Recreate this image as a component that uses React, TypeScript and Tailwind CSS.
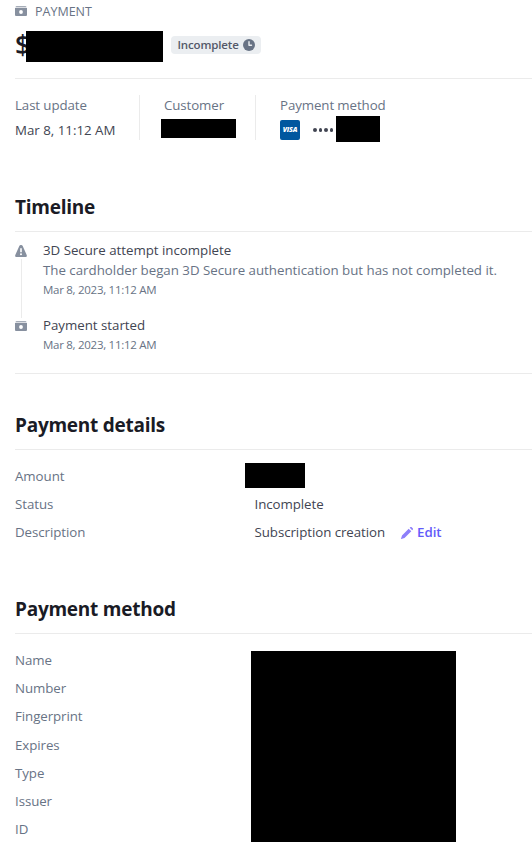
import React from 'react';

interface IconProps {
  className?: string;
}

function PaymentIcon({ className }: IconProps) {
  return (
    <svg className={className} viewBox="0 0 12 10" fill="currentColor">
      <path opacity=".75" d="M1.600 0h8.800c.6 0 1 .4 1.100 1H.5C.6.4 1 0 1.600 0z" />
      <path opacity=".3" d="M.5 1h11v1H.5z" />
      <path
        fillRule="evenodd"
        d="M0 2h12v7a1 1 0 0 1-1 1H1a1 1 0 0 1-1-1V2zm6 2.100a1.900 1.900 0 1 0 0 3.800 1.900 1.900 0 0 0 0-3.800z"
      />
    </svg>
  );
}

function WarningIcon({ className }: IconProps) {
  return (
    <svg className={className} viewBox="0 0 12 12" fill="currentColor">
      <path
        fillRule="evenodd"
        d="M4.300 1.100C5-.4 7-.4 7.700 1.100l4 8.800c.5 1.100-.1 2.100-1.200 2.100h-9C.4 12-.2 11 .3 9.900zM5.200 3.300v3.900h1.600V3.300zM6 8.200a1 1 0 1 0 0 2 1 1 0 0 0 0-2z"
      />
    </svg>
  );
}

function ClockIcon({ className }: IconProps) {
  return (
    <svg className={className} viewBox="0 0 12 12">
      <circle cx="6" cy="6" r="6" fill="currentColor" />
      <path d="M6 2.800V6.200h2.500" fill="none" stroke="#ebeef1" strokeWidth="1.400" strokeLinecap="round" strokeLinejoin="round" />
    </svg>
  );
}

function PencilIcon({ className }: IconProps) {
  return (
    <svg className={className} viewBox="0 0 12 12" fill="currentColor">
      <path d="M7.700 1.700l2.600 2.600-6.800 6.700L.3 12c-.2.100-.4-.1-.3-.3l1-3.300z" />
      <path d="M8.700.800l.5-.5c.4-.4 1.100-.4 1.500 0l1 1c.4.4.4 1.100 0 1.500l-.5.5z" />
    </svg>
  );
}

function Redacted({ className }: IconProps) {
  return <div className={`shrink-0 bg-black ${className}`} />;
}

function SectionTitle({ children }: { children: React.ReactNode }) {
  return (
    <h2 className="flex h-[38px] items-center border-b border-[#ebebeb] pb-2.5 text-[19px] font-bold tracking-[-0.25px] text-[#1a1b25]">
      {children}
    </h2>
  );
}

interface EventProps {
  icon: React.ReactNode;
  title: string;
  detail?: string;
  date: string;
  last?: boolean;
}

function TimelineEvent({ icon, title, detail, date, last }: EventProps) {
  return (
    <li className="flex gap-[15.500px]">
      <div className="flex w-[12.500px] flex-col items-center text-[#87909f]">
        <div className="flex h-[19px] items-center pt-0.5">{icon}</div>
        {!last && <div className="mb-[-3px] w-px flex-1 bg-[#ebebeb]" />}
      </div>
      <div className={last ? '' : 'pb-[15px]'}>
        <p className="h-5 leading-5 tracking-[-0.02px] text-[#414552]">{title}</p>
        {detail && <p className="h-5 leading-5 tracking-[-0.01px] whitespace-nowrap text-[#687385]">{detail}</p>}
        <p className="h-5 text-[11.500px] leading-5 tracking-[-0.28px] text-[#687385]">{date}</p>
      </div>
    </li>
  );
}

const methodFields = ['Name', 'Number', 'Fingerprint', 'Expires', 'Type', 'Issuer', 'ID'];

export default function App() {
  return (
    <main className="h-[842px] w-[532px] overflow-hidden bg-white pl-[15px] font-['Open_Sans','Noto_Sans',sans-serif] text-[13.300px] text-[#414552]">
      {/* Header */}
      <header className="h-[79px] border-b border-[#ebebeb]">
        <div className="flex h-6 items-center gap-2 text-[#87909f]">
          <PaymentIcon className="-mt-0.5 h-2.5 w-3" />
          <span className="text-[12.500px] font-medium text-[#687385]">PAYMENT</span>
        </div>
        <div className="flex pt-[7px]">
          <span className="-mt-px w-[11px] text-[27px] leading-[30px] font-semibold text-[#1a1b25]">$</span>
          <Redacted className="relative h-[31px] w-[137px]" />
          <div className="mt-[5px] ml-2 flex h-[18px] w-[90px] items-center justify-between rounded bg-[#ebeef1] pr-1.5 pl-[6.500px] text-[11.500px] font-semibold tracking-[-0.15px] text-[#545969]">
            Incomplete
            <ClockIcon className="h-3 w-3 text-[#687385]" />
          </div>
        </div>
      </header>

      {/* Summary */}
      <section className="flex pt-4">
        <div className="h-[45px] w-[125px] border-r border-[#ebebeb]">
          <p className="h-5 leading-5 tracking-[-0.1px] text-[#687385]">Last update</p>
          <p className="mt-[5px] leading-5">Mar 8, 11:12 AM</p>
        </div>
        <div className="h-[45px] w-[116px] border-r border-[#ebebeb] pl-6">
          <p className="h-5 leading-5 tracking-[-0.1px] text-[#687385]">Customer</p>
          <Redacted className="mt-1 -ml-[3px] h-[19px] w-[75px]" />
        </div>
        <div className="h-[45px] pl-6">
          <p className="h-5 leading-5 tracking-[-0.1px] text-[#687385]">Payment method</p>
          <div className="mt-px flex h-[26px] items-center">
            <div className="mt-0.5 flex h-5 w-5 items-center justify-center rounded-[2px] bg-[#00579f] text-[7px] font-extrabold tracking-[-0.2px] text-white italic">
              VISA
            </div>
            <div className="ml-[13px] flex gap-[2px] pt-0.5">
              {[0, 1, 2, 3].map((dot) => (
                <span key={dot} className="h-[3.500px] w-[3.500px] rounded-full bg-[#414552]" />
              ))}
            </div>
            <Redacted className="ml-[3px] h-[26px] w-11" />
          </div>
        </div>
      </section>

      {/* Timeline */}
      <section className="mt-[54px]">
        <SectionTitle>Timeline</SectionTitle>
        <ul className="h-[142px] border-b border-[#ebebeb] pt-2">
          <TimelineEvent
            icon={<WarningIcon className="h-3 w-3" />}
            title="3D Secure attempt incomplete"
            detail="The cardholder began 3D Secure authentication but has not completed it."
            date="Mar 8, 2023, 11:12 AM"
          />
          <TimelineEvent
            icon={<PaymentIcon className="h-2.5 w-3" />}
            title="Payment started"
            date="Mar 8, 2023, 11:12 AM"
            last
          />
        </ul>
      </section>

      {/* Payment details */}
      <section className="mt-[38px]">
        <SectionTitle>Payment details</SectionTitle>
        <dl className="pt-[13px] tracking-[-0.06px]">
          <div className="flex h-7 items-center">
            <dt className="w-[239.500px] text-[#687385]">Amount</dt>
            <dd>
              <Redacted className="-mt-[3px] -ml-[9.500px] h-[25px] w-[60px]" />
            </dd>
          </div>
          <div className="flex h-7 items-center">
            <dt className="w-[239.500px] text-[#687385]">Status</dt>
            <dd>Incomplete</dd>
          </div>
          <div className="flex h-7 items-center">
            <dt className="w-[239.500px] text-[#687385]">Description</dt>
            <dd className="flex items-center">
              Subscription creation
              <button className="ml-4 flex items-center gap-1 font-semibold text-[#625afa]">
                <PencilIcon className="h-3 w-3 text-[#8d7ffa]" />
                Edit
              </button>
            </dd>
          </div>
        </dl>
      </section>

      {/* Payment method */}
      <section className="mt-[49px]">
        <SectionTitle>Payment method</SectionTitle>
        <div className="flex">
          <dl className="w-[236px] pt-[13px] tracking-[-0.08px] text-[#687385]">
            {methodFields.map((field) => (
              <dt key={field} className="flex h-[28.170px] items-center">
                {field}
              </dt>
            ))}
          </dl>
          <Redacted className="mt-[17px] h-[191px] w-[205px]" />
        </div>
      </section>
    </main>
  );
}
